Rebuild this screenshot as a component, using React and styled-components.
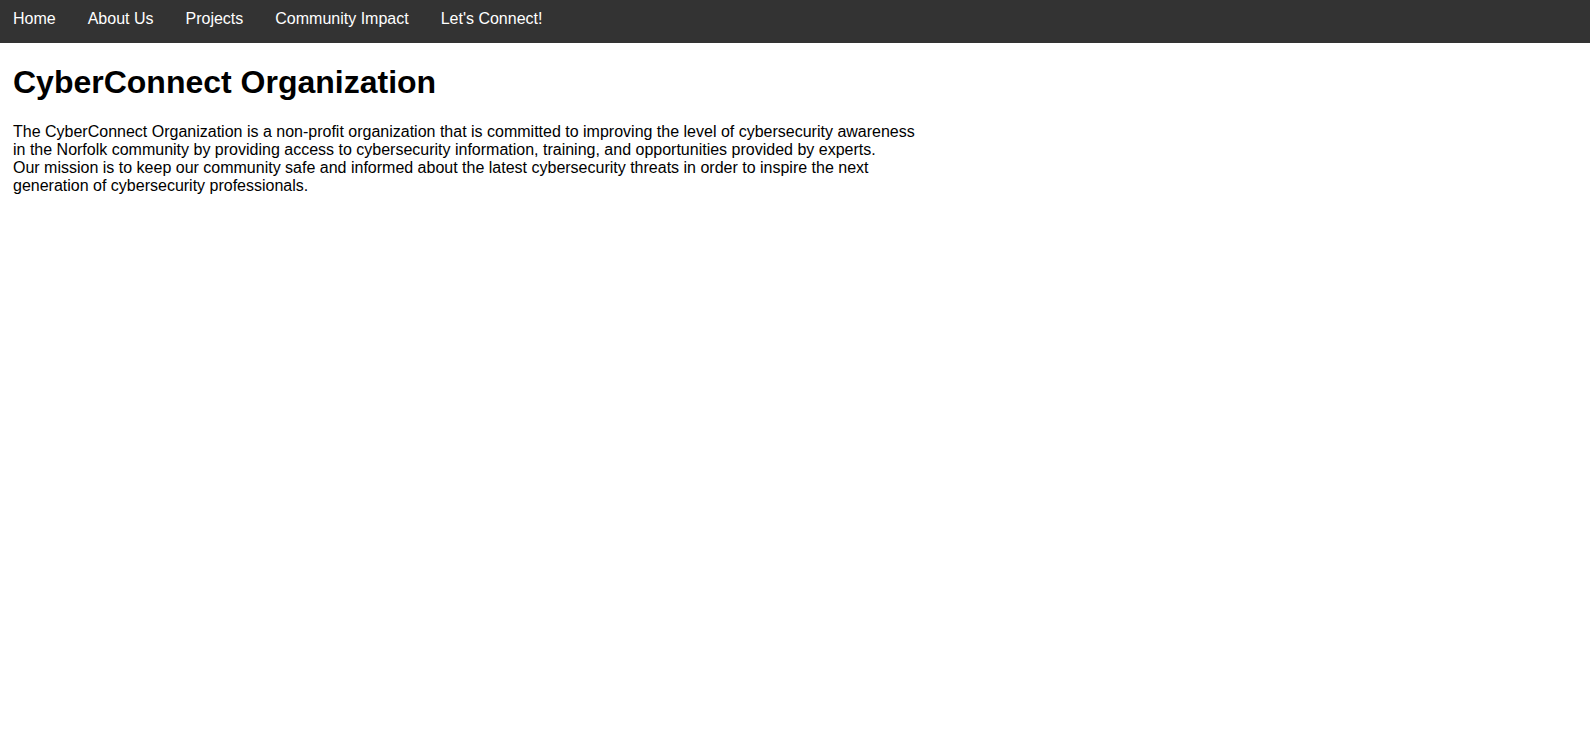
import React from 'react';
import styled, { createGlobalStyle } from 'styled-components';

const GlobalStyle = createGlobalStyle`
  body {
    margin: 0;
    background: #fff;
    font-family: "Liberation Sans", Arial, sans-serif;
    color: #000;
  }
`;

const NavBar = styled.nav`
  display: flex;
  gap: 32px;
  box-sizing: border-box;
  height: 43px;
  padding: 10px 13px 0;
  background-color: #333;
`;

const NavLink = styled.a`
  color: #fff;
  font-size: 16px;
  line-height: normal;
  text-decoration: none;
  cursor: pointer;

  &:hover {
    text-decoration: underline;
  }
`;

const Main = styled.main`
  padding: 0 13px;
`;

const Title = styled.h1`
  font-size: 32px;
  font-weight: bold;
  margin: 21.44px 0;
`;

const Intro = styled.p`
  max-width: 910px;
  font-size: 16px;
  margin: 16px 0;
`;

const links = ['Home', 'About Us', 'Projects', 'Community Impact', "Let's Connect!"];

const App = () => (
  <>
    <GlobalStyle />
    <NavBar>
      {links.map((label) => (
        <NavLink key={label} href="#">
          {label}
        </NavLink>
      ))}
    </NavBar>
    <Main>
      <Title>CyberConnect Organization</Title>
      <Intro>
        The CyberConnect Organization is a non-profit organization that is committed to improving the level of
        cybersecurity awareness in the Norfolk community by providing access to cybersecurity information, training,
        and opportunities provided by experts.
        <br />
        Our mission is to keep our community safe and informed about the latest cybersecurity threats in order to
        inspire the next generation of cybersecurity professionals.
      </Intro>
    </Main>
  </>
);

export default App;
